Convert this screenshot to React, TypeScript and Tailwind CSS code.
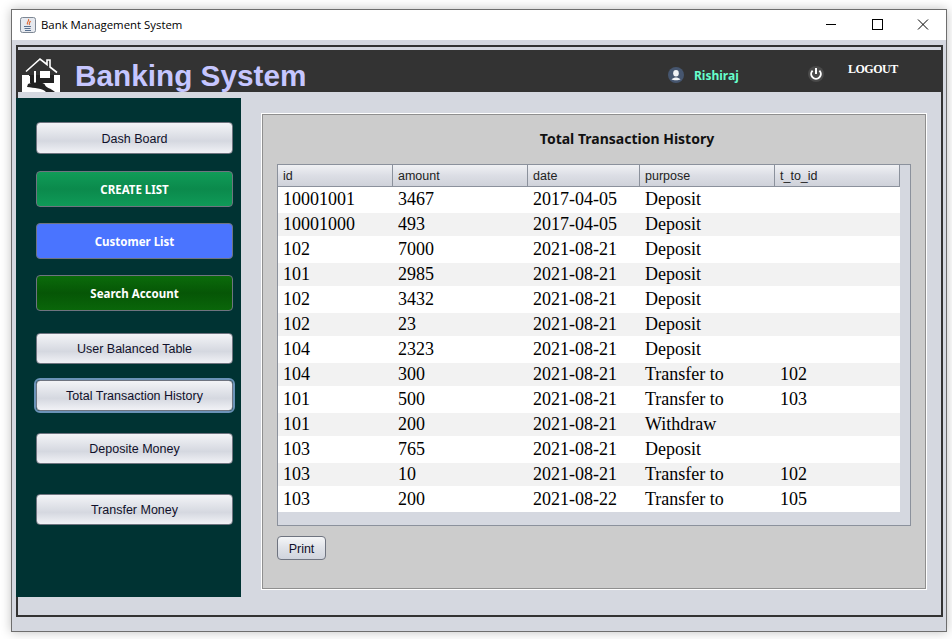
const sans = "font-['Liberation_Sans',Arial,sans-serif]";
const tahoma = "font-['Noto_Sans',sans-serif]";

const rows = [
  ["10001001", "3467", "2017-04-05", "Deposit", ""],
  ["10001000", "493", "2017-04-05", "Deposit", ""],
  ["102", "7000", "2021-08-21", "Deposit", ""],
  ["101", "2985", "2021-08-21", "Deposit", ""],
  ["102", "3432", "2021-08-21", "Deposit", ""],
  ["102", "23", "2021-08-21", "Deposit", ""],
  ["104", "2323", "2021-08-21", "Deposit", ""],
  ["104", "300", "2021-08-21", "Transfer to", "102"],
  ["101", "500", "2021-08-21", "Transfer to", "103"],
  ["101", "200", "2021-08-21", "Withdraw", ""],
  ["103", "765", "2021-08-21", "Deposit", ""],
  ["103", "10", "2021-08-21", "Transfer to", "102"],
  ["103", "200", "2021-08-22", "Transfer to", "105"],
];

const columns = [
  { name: "id", width: "w-[115px]" },
  { name: "amount", width: "w-[135px]" },
  { name: "date", width: "w-[112px]" },
  { name: "purpose", width: "w-[135px]" },
  { name: "t_to_id", width: "w-[125px]" },
];

function GreyButton({ label, focused, className }: { label: string; focused?: boolean; className?: string }) {
  return (
    <button
      className={`flex items-center justify-center w-[197px] pt-[2px] rounded-[4px] border border-[#6f7480] bg-gradient-to-b from-[#f3f4f7] via-[#d5d8e0] via-60% to-[#f1f2f6] text-[12.5px] text-[#10102a] ${sans} ${
        focused ? "outline outline-2 outline-[#6b93b8]" : ""
      } ${className ?? ""}`}
    >
      {label}
    </button>
  );
}

function ColorButton({ label, bg, className }: { label: string; bg: string; className?: string }) {
  return (
    <button
      className={`flex items-center justify-center w-[197px] h-[36px] pt-[2px] rounded-[4px] border border-[#6f7480] text-[11.5px] font-bold text-white ${tahoma} ${bg} ${className ?? ""}`}
    >
      {label}
    </button>
  );
}

function HouseIcon() {
  return (
    <svg width="38" height="35" viewBox="0 0 38 35" className="block">
      <rect x="0" y="18" width="38" height="17" fill="#fff" />
      <path d="M7 19 V14 L19 4 L31 14 V19 Z" fill="#333" />
      <path d="M4 14.5 L18 2 L25 7.5 V3 H28 V10 L35 15.5" fill="none" stroke="#fff" strokeWidth="1.6" />
      <path d="M8 18 H32 V26 H8 Z" fill="#222" />
      <rect x="12" y="14" width="2" height="12" fill="#fff" />
      <rect x="18" y="14" width="10" height="7" fill="#fff" />
      <path d="M6 27 C12 25 22 25 23 28 C24 31 29 31 33 35 H24 C21 31 12 31 5 30 Z" fill="#222" />
    </svg>
  );
}

function JavaIcon() {
  return (
    <svg width="16" height="16" viewBox="0 0 16 16" className="block">
      <rect x="0.5" y="0.5" width="15" height="15" rx="2" fill="#e6e9ef" stroke="#7d8794" />
      <path d="M8.5 2 C10 4 6 5 7.5 7.5 M10.5 4 C9.5 6 8.5 6 9.5 8" fill="none" stroke="#e0672f" strokeWidth="1.1" />
      <path d="M4 9.5 H11 M4.5 11.5 H10.5 M5 13.5 H11" stroke="#5a7190" strokeWidth="1" />
    </svg>
  );
}

function UserIcon() {
  return (
    <svg width="16" height="16" viewBox="0 0 16 16" className="block">
      <circle cx="8" cy="8" r="8" fill="#46566f" />
      <ellipse cx="8" cy="6.2" rx="2.8" ry="3.2" fill="#f1f3f6" />
      <path d="M3.5 12.6 C5 10.8 6.6 10.4 8 10.4 C9.4 10.4 11 10.8 12.5 12.6 C10.5 13.6 5.5 13.6 3.5 12.6 Z" fill="#f1f3f6" />
    </svg>
  );
}

function PowerIcon() {
  return (
    <svg width="16" height="16" viewBox="0 0 16 16" className="block">
      <circle cx="8" cy="8" r="8" fill="#4a4a4a" />
      <path d="M4.6 4.6 A4.8 4.8 0 1 0 11.4 4.6" fill="none" stroke="#fff" strokeWidth="2" />
      <path d="M8 2 V8" stroke="#fff" strokeWidth="2" />
    </svg>
  );
}

function WindowControls() {
  return (
    <div className="flex items-center h-full text-black">
      <svg width="46" height="30" viewBox="0 0 46 30" className="block">
        <path d="M18 14.5 H28" stroke="#000" strokeWidth="1" />
      </svg>
      <svg width="46" height="30" viewBox="0 0 46 30" className="block">
        <rect x="18.5" y="9.5" width="10" height="10" fill="none" stroke="#000" strokeWidth="1" />
      </svg>
      <svg width="46" height="30" viewBox="0 0 46 30" className="block">
        <path d="M18 9.5 L28 19.5 M28 9.5 L18 19.5" stroke="#000" strokeWidth="1" />
      </svg>
    </div>
  );
}

export default function App() {
  return (
    <div className="w-[952px] h-[639px] bg-white pt-[9px] pl-[11px] overflow-hidden">
      <div className="w-[936px] h-[623px] border border-[#6e6e6e] bg-[#d5d8e0] shadow-[0_0_10px_rgba(0,0,0,0.25)] flex flex-col">
        {/* title bar */}
        <div className="h-[30px] bg-white flex items-center justify-between shrink-0">
          <div className="flex items-center pl-[8px] gap-[5px]">
            <JavaIcon />
            <span className="text-[11.4px] text-black font-['Open_Sans',sans-serif]">Bank Management System</span>
          </div>
          <WindowControls />
        </div>

        {/* inner frame */}
        <div className="mt-[5px] ml-[4px] w-[927px] h-[572px] border-2 border-[#333333] bg-[#d5d8e0]">
          <div className="bg-[#333333] h-[45px] flex flex-col">
            <div className="h-[3px] bg-[#d5d8e0] shrink-0" />
            <div className="flex-1 flex relative">
              <div className="mt-[7px] ml-[4px] overflow-hidden">
                <HouseIcon />
              </div>
              <span className={`ml-[15px] mt-[8px] text-[29.75px] leading-[36px] font-bold text-[#c6c6ff] ${sans}`}>
                Banking System
              </span>
              <div className="absolute left-[650px] top-[16px] flex items-center gap-[10px]">
                <UserIcon />
                <span className={`text-[12px] leading-[16px] pt-[2px] font-bold text-[#66ffcc] ${tahoma}`}>Rishiraj</span>
              </div>
              <div className="absolute left-[790px] top-[16px]">
                <PowerIcon />
              </div>
              <span className="absolute left-[830px] top-[10px] text-[12px] font-bold tracking-[-0.5px] text-white font-['Liberation_Serif',serif]">
                LOGOUT
              </span>
            </div>
          </div>

          <div className="flex mt-[6px] -ml-[2px]">
            {/* sidebar */}
            <div className="w-[225px] h-[499px] bg-[#003333] pl-[20px] pt-[24px] flex flex-col shrink-0">
              <GreyButton label="Dash Board" className="h-[32px]" />
              <ColorButton label="CREATE LIST" bg="bg-gradient-to-b from-[#109c58] via-[#0b8a4c] to-[#0f9a58]" className="mt-[17px]" />
              <ColorButton label="Customer List" bg="bg-[#4a74ff]" className="mt-[16px]" />
              <ColorButton label="Search Account" bg="bg-gradient-to-b from-[#0b6b0b] via-[#065606] to-[#0a660a]" className="mt-[16px]" />
              <GreyButton label="User Balanced Table" className="h-[31px] mt-[22px]" />
              <GreyButton label="Total Transaction History" focused className="h-[31px] mt-[16px]" />
              <GreyButton label="Deposite Money" className="h-[31px] mt-[22px]" />
              <GreyButton label="Transfer Money" className="h-[31px] mt-[30px]" />
            </div>

            {/* content panel, etched border: white outside, grey inside */}
            <div className="ml-[20px] mt-[15px] w-[666px] h-[477px] border border-white">
              <div className="h-full border border-[#8f8f8f] bg-[#cccccc]">
                <div className={`mt-[14px] text-center text-[14px] font-bold text-[#111] pl-[66px] leading-[20px] ${tahoma}`}>
                  Total Transaction History
                </div>
                <div className="mt-[15px] ml-[14px] w-[634px] h-[362px] border border-[#8b919c] bg-[#d5d8e0]">
                  <div className="flex w-[622px] h-[22px] border-b border-[#8b919c] bg-gradient-to-b from-[#f0f1f4] via-[#dcdee5] to-[#cfd2da]">
                    {columns.map((c) => (
                      <div
                        key={c.name}
                        className={`${c.width} pl-[5px] border-r border-[#8b919c] text-[12.5px] leading-[23px] text-[#222] ${sans}`}
                      >
                        {c.name}
                      </div>
                    ))}
                  </div>
                  {rows.map((r, i) => {
                    const odd = i % 2 === 1;
                    const last = i === rows.length - 1;
                    const h = odd ? "h-[23px]" : i === 0 || last ? "h-[26px]" : "h-[27px]";
                    return (
                      <div
                        key={i}
                        className={`flex w-[622px] items-center ${h} ${last ? "" : "pb-[2px]"} ${odd ? "bg-[#f2f2f2]" : "bg-white"}`}
                      >
                        {r.map((cell, j) => (
                          <div
                            key={j}
                            className={`${columns[j].width} pl-[5px] text-[18px] leading-[22px] text-black font-['Liberation_Serif',serif]`}
                          >
                            {cell}
                          </div>
                        ))}
                      </div>
                    );
                  })}
                </div>
                <button
                  className={`mt-[10px] ml-[14px] w-[49px] h-[24px] pt-[2px] rounded-[4px] border border-[#6f7480] bg-gradient-to-b from-[#f5f6f8] via-[#dfe2e8] to-[#d0d4dd] text-[12.5px] text-[#10102a] ${sans}`}
                >
                  Print
                </button>
              </div>
            </div>
          </div>
        </div>
      </div>
    </div>
  );
}
